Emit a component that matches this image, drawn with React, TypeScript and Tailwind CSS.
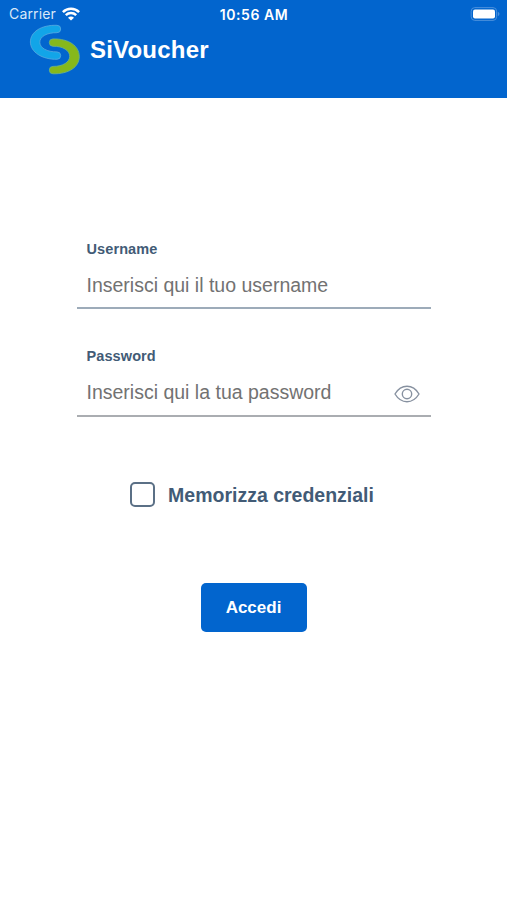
import { useState } from "react"

function StatusBar() {
  return (
    <div className="grid h-[27px] grid-cols-3 items-center pl-[9px] pr-[7px] font-['Inter',sans-serif] text-[14px] leading-none text-white">
      <div className="flex items-center gap-[6px]">
        <span className="pt-px tracking-[0.15px] text-[#d9e8f8]">Carrier</span>
        <svg width="18" height="14" viewBox="0 0 18 14" fill="none" stroke="white" strokeWidth="2.5">
          <path d="M0.9 5.1C5.4 0.7 12.6 0.7 17.1 5.1" />
          <path d="M3.8 8.2C6.8 5.4 11.2 5.4 14.2 8.2" />
          <path d="M9 13.6 6 10.7C7.7 9.2 10.3 9.2 12 10.7Z" fill="white" stroke="none" />
        </svg>
      </div>
      <span className="-ml-px whitespace-nowrap pt-[2px] text-center font-semibold tracking-[0.55px]">10:56 AM</span>
      <svg className="justify-self-end" width="30" height="14" viewBox="0 0 30 14">
        <rect x="1.2" y="0.6" width="25.4" height="12.8" rx="3.6" fill="none" stroke="#4a90dc" strokeWidth="1" />
        <rect x="3" y="2.5" width="22" height="9" rx="2" fill="white" />
        <path d="M27.8 4.8C30 5.6 30 8.4 27.8 9.2Z" fill="#4a90dc" />
      </svg>
    </div>
  )
}

function Logo() {
  return (
    <svg width="52" height="52" viewBox="29 24 52 52" strokeWidth="0.8">
      <path
        d="M57 25.3C41 24.8 30.4 32 30.4 42C30.4 52 42 59.6 57 59.3A3.7 3.7 0 0 0 57 51.9C47 52 39.8 48 39.8 42.2C39.8 36.5 47 32.5 57 32.7A3.7 3.7 0 0 0 57 25.3Z"
        fill="#12a5e8"
        stroke="#5aa9e0"
      />
      <path
        d="M53 38.9C69 38.6 79.3 46 79.3 56.5C79.3 67 69 74.1 53 73.8A3.7 3.7 0 0 1 53 66.4C63 66.5 69.7 62 69.7 56.3C69.7 50.5 63 46.1 53 46.3A3.7 3.7 0 0 1 53 38.9Z"
        fill="#86b81b"
        stroke="#6fb38a"
      />
    </svg>
  )
}

function EyeIcon() {
  return (
    <svg width="26" height="18" viewBox="0 0 26 18" fill="none" stroke="#8791a0" strokeWidth="1.4">
      <path d="M1 9C4 4 8 1.3 13 1.3S22 4 25 9C22 14 18 16.7 13 16.7S4 14 1 9Z" />
      <circle cx="13" cy="9" r="4.7" />
    </svg>
  )
}

export default function App() {
  const [visible, setVisible] = useState(false)

  return (
    <div className="flex h-[900px] w-full flex-col bg-white font-['Liberation_Sans',Arial,sans-serif]">
      <header className="h-[98px] bg-[#0265ce]">
        <StatusBar />
        <div className="-mt-[3px] flex h-[52px] items-center gap-[9px] pl-[29px]">
          <Logo />
          <h1 className="text-[24px] font-bold leading-none tracking-[0.2px] text-white">SiVoucher</h1>
        </div>
      </header>

      <form className="flex flex-col items-center pt-[140px]">
        <div className="h-[71px] w-[354px] border-b-2 border-[#9dabb9] pl-[10px]">
          <label htmlFor="username" className="block pt-[2px] text-[14.5px] font-bold leading-[18px] tracking-[0.1px] text-[#425b76]">
            Username
          </label>
          <input
            id="username"
            className="mt-[12px] block h-[30px] w-full text-[19.5px] outline-none placeholder:text-[#727272]"
            placeholder="Inserisci qui il tuo username"
          />
        </div>

        <div className="mt-[36px] h-[72px] w-[354px] border-b-2 border-[#aaadb1] pl-[10px]">
          <label htmlFor="password" className="block pt-[2px] text-[14.5px] font-bold leading-[18px] tracking-[0.1px] text-[#425b76]">
            Password
          </label>
          <div className="mt-[12px] flex h-[30px] items-center pr-[11px]">
            <input
              id="password"
              type={visible ? "text" : "password"}
              className="h-[30px] min-w-0 flex-1 text-[19.5px] outline-none placeholder:text-[#727272]"
              placeholder="Inserisci qui la tua password"
            />
            <button type="button" aria-label="Mostra password" className="pt-[3px]" onClick={() => setVisible(!visible)}>
              <EyeIcon />
            </button>
          </div>
        </div>

        <label className="mt-[63px] flex h-[28px] items-center gap-[13px] pr-[3px] text-[19.5px] font-bold text-[#425b76]">
          <input
            type="checkbox"
            className="size-[25px] appearance-none rounded-[5px] border-2 border-[#5b7086] bg-white"
          />
          <span className="pt-[3px]">Memorizza credenziali</span>
        </label>

        <button
          type="button"
          className="mt-[75px] h-[49px] w-[106px] rounded-[5px] bg-[#0265ce] text-[17px] font-bold text-white"
        >
          Accedi
        </button>
      </form>
    </div>
  )
}
